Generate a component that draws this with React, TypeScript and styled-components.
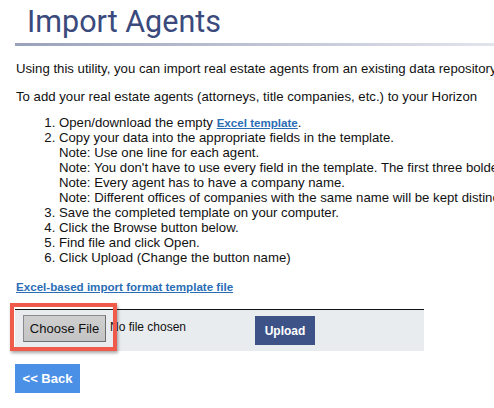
import React from "react";
import styled, { createGlobalStyle } from "styled-components";

const Global = createGlobalStyle`
  html, body { margin: 0; padding: 0; background: #fff; overflow: hidden; }
  body { font-family: "Liberation Sans", Arial, sans-serif; color: #111; }
`;

const Page = styled.div`
  width: 494px;
  height: 408px;
  overflow: hidden;
  padding-left: 15px;
  box-sizing: border-box;
  white-space: nowrap;
`;

const Title = styled.h1`
  margin: 0;
  padding: 4px 0 0 12px;
  height: 39px;
  box-sizing: border-box;
  font-family: Roboto, "Open Sans", sans-serif;
  font-weight: 400;
  font-size: 30.5px;
  line-height: 36px;
  color: #3a4a7c;
`;

const Rule = styled.div`
  height: 3px;
  margin-top: 4px;
  width: 520px;
  background: linear-gradient(to right, #9aa1bb, #e8eaf0);
`;

const Para = styled.p<{ $top: number }>`
  margin: ${(p) => p.$top}px 0 0 1px;
  font-size: 13.2px;
  line-height: 15px;
  overflow: hidden;
`;

const Steps = styled.ol`
  margin: 11px 0 0 0;
  padding-left: 44px;
  font-size: 13.2px;
  line-height: 15px;
`;

const Note = styled.div`
  overflow: hidden;
`;

const InlineLink = styled.a`
  color: #2a6db5;
  font-weight: bold;
  font-size: 11.6px;
  text-decoration: underline;
`;

const TemplateLink = styled.a`
  display: block;
  margin: 15px 0 0 1px;
  color: #2a6db5;
  font-weight: bold;
  font-size: 11.6px;
  line-height: 14px;
  text-decoration: underline;
`;

const UploadBar = styled.div`
  position: relative;
  margin-top: 15px;
  width: 409px;
  height: 42px;
  border-top: 1px solid #111;
  background: #e9ecee;
  display: flex;
  align-items: flex-start;
  padding: 5px 0 0 8px;
  box-sizing: border-box;
`;

const FileButton = styled.button`
  width: 83px;
  height: 27px;
  background: linear-gradient(#cfcfcf, #c4c4c4);
  border: 1px solid #8a8a8a;
  border-bottom-color: #6e6e6e;
  border-right-color: #6e6e6e;
  font-family: "Liberation Sans", Arial, sans-serif;
  font-size: 13px;
  color: #111;
  padding: 0;
`;

const FileText = styled.span`
  margin: 5px 0 0 4px;
  font-size: 12px;
  line-height: 15px;
  color: #111;
`;

const UploadButton = styled.button`
  margin: 1px 0 0 69px;
  width: 60px;
  height: 29px;
  background: #3d5388;
  color: #fff;
  border: none;
  font-family: "Liberation Sans", Arial, sans-serif;
  font-weight: bold;
  font-size: 12px;
  padding: 0;
`;

const Highlight = styled.div`
  position: absolute;
  left: -5px;
  top: -7px;
  width: 107px;
  height: 48px;
  box-sizing: border-box;
  border: 4px solid #ef5a4b;
  box-shadow: 1px 2px 3px rgba(0, 0, 0, 0.35);
  pointer-events: none;
`;

const BackButton = styled.button`
  display: block;
  margin-top: 13px;
  width: 65px;
  height: 29px;
  background: #4a90e6;
  color: #fff;
  border: none;
  font-family: "Liberation Sans", Arial, sans-serif;
  font-weight: bold;
  font-size: 13px;
  padding: 0;
`;

export default function App() {
  return (
    <>
      <Global />
      <Page>
        <Title>Import Agents</Title>
        <Rule />
        <Para $top={15}>
          Using this utility, you can import real estate agents from an existing data repository
        </Para>
        <Para $top={13}>
          To add your real estate agents (attorneys, title companies, etc.) to your Horizon
        </Para>
        <Steps>
          <li>
            Open/download the empty <InlineLink href="#">Excel template</InlineLink>.
          </li>
          <li>
            Copy your data into the appropriate fields in the template.
            <Note>Note: Use one line for each agent.</Note>
            <Note>
              Note: You don't have to use every field in the template. The first three bolded
            </Note>
            <Note>Note: Every agent has to have a company name.</Note>
            <Note>Note: Different offices of companies with the same name will be kept distinct.</Note>
          </li>
          <li>Save the completed template on your computer.</li>
          <li>Click the Browse button below.</li>
          <li>Find file and click Open.</li>
          <li>Click Upload (Change the button name)</li>
        </Steps>
        <TemplateLink href="#">Excel-based import format template file</TemplateLink>
        <UploadBar>
          <FileButton>Choose File</FileButton>
          <FileText>No file chosen</FileText>
          <UploadButton>Upload</UploadButton>
          <Highlight />
        </UploadBar>
        <BackButton>&lt;&lt; Back</BackButton>
      </Page>
    </>
  );
}
